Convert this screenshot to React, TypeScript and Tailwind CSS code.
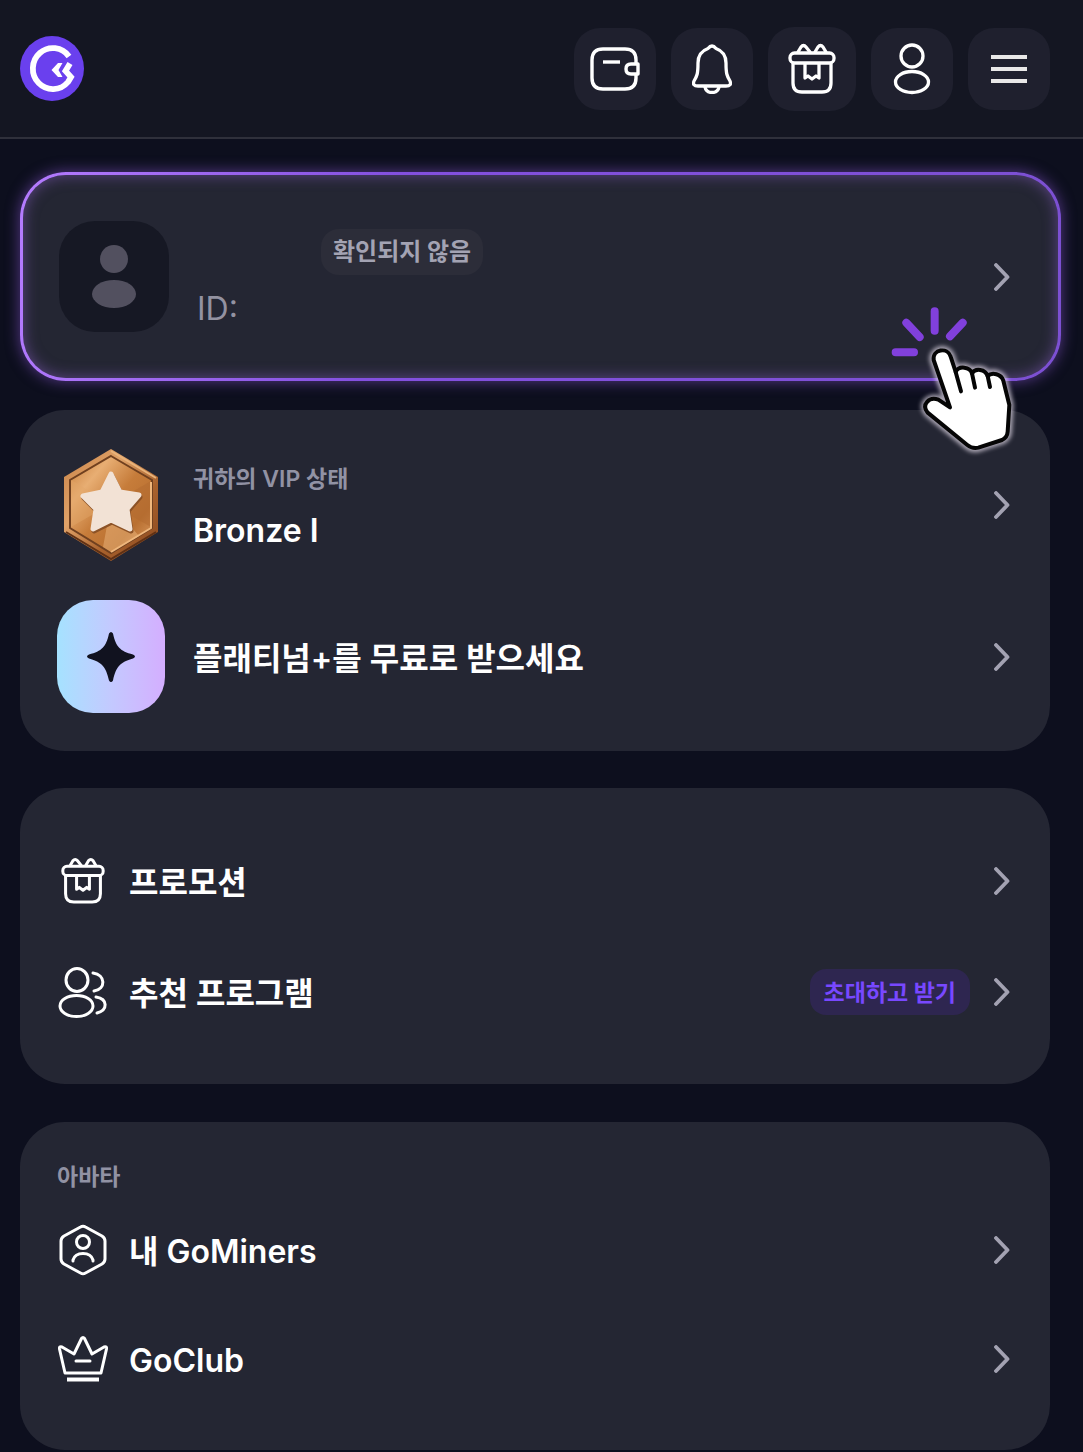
import type { ReactNode } from "react";

const line = {
  fill: "none",
  stroke: "currentColor",
  strokeLinecap: "round" as const,
  strokeLinejoin: "round" as const,
};

function Logo() {
  return (
    <svg viewBox="0 0 64 66" className="h-[66px] w-16" role="img" aria-label="GoMining">
      <ellipse cx="32" cy="32.500" rx="32" ry="32.500" fill="#6a40ee" />
      <path
        d="M49 20.500A20 20.500 0 1 0 48 46L51 41L45.500 35L50 27.500"
        fill="none"
        stroke="#fff"
        strokeWidth="5.800"
      />
      <path d="M38 27L42.500 27L38.500 34L42.500 41H38L31.500 34Z" fill="#fff" />
    </svg>
  );
}

function WalletIcon() {
  return (
    <svg viewBox="0 0 50 44" className="h-11 w-[50px]" {...line} strokeWidth="3.400">
      <path d="M46 16V13Q46 2 35 2H13Q2 2 2 13V31Q2 42 13 42H35Q46 42 46 31V28" />
      <path d="M48 17H41Q36 17 36 22T41 27H48Z" />
      <path d="M13 15H30" strokeLinecap="butt" />
    </svg>
  );
}

function BellIcon() {
  return (
    <svg viewBox="0 0 40 50" className="h-[50px] w-10" {...line} strokeWidth="3.300">
      <path d="M16 4.500Q20 -.5 24 4.500C31 7 34 12 34 19C34 30 35 32 38 37Q40 42 34 42H6Q0 42 2 37C5 32 6 30 6 19C6 12 9 7 16 4.500Z" />
      <path d="M13 43Q14 48.500 20 48.500T27 43" />
    </svg>
  );
}

function GiftIcon({ className }: { className: string }) {
  return (
    <svg viewBox="0 0 48 52" className={className} {...line} strokeWidth="3.300">
      <rect x="2" y="10" width="44" height="10" rx="4.500" />
      <path d="M5 20V40Q5 49 14 49H34Q43 49 43 40V20" />
      <path d="M10 9L13 4Q15.500 1 18 4L22 9M27 9L30 4Q32.500 1 35 4L38 9" />
      <path d="M17 21V35L20 33L24 36L28 33L31 35V21" />
    </svg>
  );
}

function UserIcon() {
  return (
    <svg viewBox="0 0 38 52" className="h-[52px] w-[38px]" {...line} strokeWidth="3.300">
      <circle cx="19" cy="13" r="11" />
      <ellipse cx="19" cy="39" rx="16.500" ry="10.500" />
    </svg>
  );
}

function MenuIcon() {
  return (
    <svg viewBox="0 0 36 30" className="h-[30px] w-9" fill="none" stroke="#e9e8e8" strokeWidth="4">
      <path d="M0 3H36M0 15H36M0 27H36" />
    </svg>
  );
}

function FriendsIcon() {
  return (
    <svg viewBox="0 0 50 52" className="h-[52px] w-[50px]" {...line} strokeWidth="3">
      <ellipse cx="19" cy="14" rx="11" ry="11.500" />
      <ellipse cx="18.500" cy="40" rx="16.500" ry="10.500" />
      <path d="M35 7C48 9 48 23 36 25" />
      <path d="M38 31C50 33 50 44 39 47" />
    </svg>
  );
}

function MinerIcon() {
  return (
    <svg viewBox="0 0 48 52" className="h-[52px] w-12" {...line} strokeWidth="3">
      <path d="M21.500 3Q24 1.500 26.500 3L43 12Q46 14 46 17V35Q46 38 43 40L26.500 49Q24 50.500 21.500 49L5 40Q2 38 2 35V17Q2 14 5 12Z" />
      <circle cx="24" cy="18" r="6.500" />
      <path d="M14 37V36Q16 29.500 24 29.500T34 36V37" />
    </svg>
  );
}

function CrownIcon() {
  return (
    <svg viewBox="0 0 50 46" className="h-[46px] w-[50px]" {...line} strokeWidth="3">
      <path d="M23.500 2.500Q25 .5 26.500 2.500L34 18L46 11Q49 10 48.500 13L43 37H7L1.500 13Q1 10 4 11L16 18Z" />
      <path d="M18 25H32" />
      <path d="M9 43.500H41" strokeWidth="4" strokeLinecap="butt" />
    </svg>
  );
}

function Medal() {
  return (
    <svg viewBox="0 0 96 114" className="h-[114px] w-24">
      <defs>
        <linearGradient id="rim" x1="0" y1="0" x2="1" y2="1">
          <stop offset="0" stopColor="#c98348" />
          <stop offset=".35" stopColor="#e0a268" />
          <stop offset=".65" stopColor="#a9622d" />
          <stop offset="1" stopColor="#87461d" />
        </linearGradient>
        <linearGradient id="face" x1="0" y1="0" x2="1" y2="1">
          <stop offset="0" stopColor="#c67b37" />
          <stop offset=".25" stopColor="#e8ae73" />
          <stop offset=".5" stopColor="#c67c3a" />
          <stop offset=".75" stopColor="#b97031" />
          <stop offset="1" stopColor="#e0a066" />
        </linearGradient>
      </defs>
      <path d="M48 1L95 29V84L48 113L1 84V29Z" fill="url(#rim)" />
      <path d="M48 3L93 30" stroke="#e9b37a" strokeWidth="2" />
      <path d="M3 84L48 111L93 84" fill="none" stroke="#5f3014" strokeWidth="2" />
      <path d="M48 8L89 32V80L48 105L7 80V32Z" fill="url(#face)" stroke="#70401f" strokeWidth="2" />
      <path d="M48 56L8 32V79Z" fill="#e3a669" opacity=".45" />
      <path d="M48 56L88 33V79Z" fill="#b16a30" opacity=".5" />
      <path d="M48 56L40 99L48 104L76 88Z" fill="#f0bd86" opacity=".45" />
      <path d="M88 34V80L48 104" fill="none" stroke="#efb77c" strokeWidth="2" />
      <path
        d="M48 26L57 44L76 47L64 61L67 81L48 72L30 81L33 61L20 48L39 44Z"
        fill="#8c5226"
        stroke="#8c5226"
        strokeWidth="5"
        strokeLinejoin="round"
        transform="translate(1 2)"
      />
      <path
        d="M48 26L57 44L76 47L64 61L67 81L48 72L30 81L33 61L20 48L39 44Z"
        fill="#f2e2d5"
        stroke="#f2e2d5"
        strokeWidth="5"
        strokeLinejoin="round"
      />
    </svg>
  );
}

function Chevron() {
  return (
    <svg viewBox="0 0 16 28" className="h-7 w-4 shrink-0 text-[#a3a2b2]" {...line} strokeWidth="3.800" aria-hidden="true">
      <path d="M2 2L13.500 14L2 26" />
    </svg>
  );
}

function ClickHand() {
  return (
    <svg
      viewBox="0 0 639 540"
      className="pointer-events-none absolute top-[118px] -right-[22px] z-10 h-[180px] w-[213px]"
      aria-hidden="true"
    >
      <defs>
        <filter id="halo" x="-20%" y="-20%" width="140%" height="140%">
          <feGaussianBlur stdDeviation="6" />
        </filter>
        <path
          id="hand"
          d="M191 210C187 178 233 170 242 200L257 246C266 226 300 230 306 250C316 233 346 237 353 258C366 245 394 252 400 272L418 345L413 425Q412 442 396 450L325 473Q307 477 292 465L173 368C153 343 178 319 205 329L240 352Z"
        />
      </defs>
      <use href="#hand" fill="#fff" stroke="#e9e1ef" strokeWidth="26" filter="url(#halo)" opacity=".7" />
      <use href="#hand" fill="#fff" stroke="#050505" strokeWidth="12" strokeLinejoin="round" />
      <path
        d="M257 246L273 304M306 250L315 293M353 258L360 291"
        fill="none"
        stroke="#050505"
        strokeWidth="12"
        strokeLinecap="round"
      />
      <path
        d="M194 64V122M109 98L149 141M278 98L240 139M77 187H132"
        fill="none"
        stroke="#8140dc"
        strokeWidth="24"
        strokeLinecap="round"
      />
    </svg>
  );
}

function HeaderButton({ label, wide, children }: { label: string; wide?: boolean; children: ReactNode }) {
  return (
    <button
      aria-label={label}
      className={`flex items-center justify-center rounded-[26px] bg-[#1f202e] text-white ${
        wide ? "h-[84px] w-[88px]" : "h-[82px] w-[82px]"
      }`}
    >
      {children}
    </button>
  );
}

function MenuRow({ icon, label, badge, height }: { icon: ReactNode; label: string; badge?: string; height: string }) {
  return (
    <a href="#" className={`flex items-center ${height}`}>
      <span className="flex w-[52px] justify-center">{icon}</span>
      <span className="ml-5 flex-1 pt-1 text-[32px] leading-10 font-semibold">{label}</span>
      {badge && (
        <span className="mr-6 flex h-[46px] items-center rounded-2xl bg-[#2e2650] px-[14px] pt-1 text-[23px] font-bold text-[#7848ff]">
          {badge}
        </span>
      )}
      <Chevron />
    </a>
  );
}

export default function App() {
  return (
    <div className="min-h-screen bg-[#0d0f1e] font-['Inter','Noto_Sans_CJK_KR',sans-serif] text-white">
      <header className="flex h-[139px] items-center justify-between border-b-2 border-[#2f303b] bg-[#141622] pr-[33px] pl-5">
        <a href="#">
          <Logo />
        </a>
        <nav className="flex items-center gap-[15px]">
          <HeaderButton label="지갑">
            <WalletIcon />
          </HeaderButton>
          <HeaderButton label="알림">
            <BellIcon />
          </HeaderButton>
          <HeaderButton label="프로모션" wide>
            <GiftIcon className="h-[52px] w-12" />
          </HeaderButton>
          <HeaderButton label="프로필">
            <UserIcon />
          </HeaderButton>
          <HeaderButton label="메뉴">
            <MenuIcon />
          </HeaderButton>
        </nav>
      </header>

      <main className="pr-[33px] pb-0.5 pl-5">
        <div className="relative mt-[33px] -mr-[11px]">
          <a
            href="#"
            className="flex h-[209px] items-center rounded-[46px] border-[3px] border-transparent pr-12 pl-9 shadow-[0_0_14px_1px_#6d46a8b0,inset_0_0_14px_1px_#8058b890] [background:linear-gradient(#242633,#242633)_padding-box,linear-gradient(100deg,#b57cff,#8350df_35%,#7c50d2)_border-box]"
          >
            <span className="flex h-[111px] w-[110px] items-center justify-center rounded-[36px] bg-[#161824]">
              <svg viewBox="0 0 44 64" className="h-16 w-11" fill="#52505f">
                <circle cx="22" cy="14" r="14" />
                <ellipse cx="22" cy="49" rx="22" ry="14" />
              </svg>
            </span>
            <span className="ml-7 flex flex-1 flex-col items-start gap-[14px] pt-1">
              <span className="ml-[124px] flex h-[46px] items-center rounded-[18px] bg-[#2c2d39] px-3 text-2xl font-bold text-[#a3a3b3]">
                확인되지 않음
              </span>
              <span className="text-[32px] leading-10 font-normal text-[#9392a1]">ID:</span>
            </span>
            <Chevron />
          </a>
          <ClickHand />
        </div>

        <section className="mt-[29px] flex flex-col gap-[38px] rounded-[45px] bg-[#242633] py-[38px] pr-10 pl-[37px]">
          <a href="#" className="flex items-center">
            <span className="flex w-[108px] justify-center">
              <Medal />
            </span>
            <span className="ml-7 flex flex-1 flex-col gap-4 pt-1">
              <span className="text-[23px] leading-8 font-semibold text-[#9192a4]">귀하의 VIP 상태</span>
              <span className="text-[32px] leading-10 font-semibold">Bronze I</span>
            </span>
            <Chevron />
          </a>
          <a href="#" className="flex items-center">
            <span className="flex h-[113px] w-[108px] items-center justify-center rounded-[36px] bg-linear-to-r from-[#a5e2ff] via-[#c3c9ff] to-[#d4aeff]">
              <svg viewBox="0 0 48 50" className="h-[50px] w-12" fill="#11121f">
                <path d="M22 1.500Q24-1.500 26 1.500C29 15 33 19 46 22.500Q50 24.500 46 26.500C33 30 29 35 26 48.500Q24 51.500 22 48.500C19 35 15 30 2 26.500Q-2 24.500 2 22.500C15 19 19 15 22 1.500Z" />
              </svg>
            </span>
            <span className="ml-7 flex-1 pt-1 text-[32px] leading-10 font-semibold">플래티넘+를 무료로 받으세요</span>
            <Chevron />
          </a>
        </section>

        <section className="mt-[37px] rounded-[45px] bg-[#242633] py-[37px] pr-10 pl-[37px]">
          <MenuRow icon={<GiftIcon className="h-12 w-11" />} label="프로모션" height="h-[111px]" />
          <MenuRow icon={<FriendsIcon />} label="추천 프로그램" badge="초대하고 받기" height="h-[111px]" />
        </section>

        <section className="mt-[38px] rounded-[45px] bg-[#242633] py-[37px] pr-10 pl-[37px]">
          <h2 className="text-[23px] leading-9 font-semibold text-[#9192a4]">아바타</h2>
          <MenuRow icon={<MinerIcon />} label="내 GoMiners" height="h-[109px]" />
          <MenuRow icon={<CrownIcon />} label="GoClub" height="h-[109px]" />
        </section>
      </main>
    </div>
  );
}
